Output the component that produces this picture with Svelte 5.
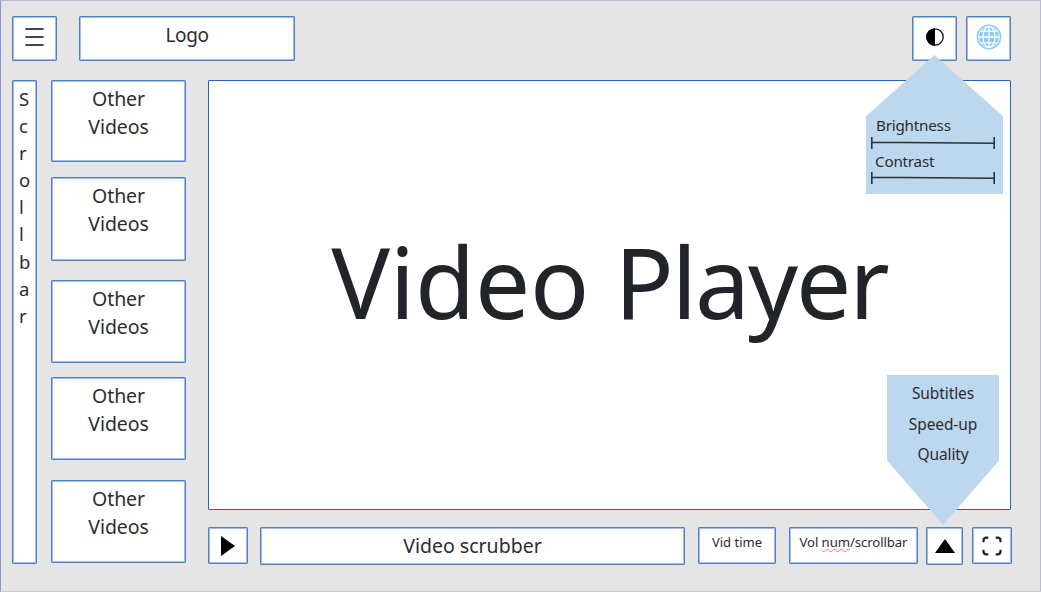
<script>
  const videos = [
    { height: 82, gap: 15 },
    { height: 84, gap: 19 },
    { height: 83, gap: 14 },
    { height: 83, gap: 20 },
    { height: 83, gap: 0 }
  ];
  const letters = 'Scrollbar'.split('');
</script>

<div class="page">
  <header>
    <button class="box square" aria-label="Menu">
      <svg width="20" height="20" viewBox="0 0 20 20"><path d="M1.2 2H17.8M1.2 10H17.8M1.2 18H17.8" stroke="#48445a" stroke-width="2.2" stroke-linecap="round" /></svg>
    </button>
    <div class="box logo"><span>Logo</span></div>
    <button class="box square contrast" aria-label="Display">
      <svg width="20" height="20" viewBox="0 0 20 20"><circle cx="10" cy="10" r="8.2" fill="#fff" stroke="#111" stroke-width="1.3" /><path d="M10 1.2A8.8 8.8 0 0 0 10 18.8Z" fill="#000" /></svg>
    </button>
    <button class="box square globe" aria-label="Language">
      <svg width="26" height="26" viewBox="0 0 26 26">
        <circle cx="13" cy="13" r="12.4" fill="#8acbfb" />
        <g fill="none" stroke="#fff" stroke-width="1.3"><circle cx="13" cy="13" r="10.5" stroke-width=".8" /><ellipse cx="13" cy="13" rx="6" ry="10.5" /><path d="M13 2.5V23.5M2.5 13H23.5M4.5 7.2H21.5M4.5 18.8H21.5" /></g>
      </svg>
    </button>
  </header>

  <main>
    <div class="box scrollbar">{#each letters as letter}<span>{letter}</span>{/each}</div>
    <aside>
      {#each videos as video}
        <div class="box video" style="height:{video.height}px;margin-bottom:{video.gap}px"><span>Other</span><span>Videos</span></div>
      {/each}
    </aside>
    <section>
      <div class="box player"><h1>Video <span>Player</span></h1></div>
      <div class="controls">
        <button class="box play" aria-label="Play"><svg width="14" height="20" viewBox="0 0 14 20"><path d="M0 0L14 10L0 20Z" /></svg></button>
        <div class="box scrubber"><span>Video scrubber</span></div>
        <div class="box time"><span>Vid time</span></div>
        <div class="box volume"><span>Vol <u>num</u>/scrollbar</span></div>
        <button class="box up" aria-label="Settings"><svg width="20" height="14" viewBox="0 0 20 14"><path d="M0 14L10 0L20 14Z" /></svg></button>
        <button class="box full" aria-label="Full screen"><svg width="20" height="20" viewBox="0 0 20 20"><path d="M1.5 6.3V4.5Q1.5 1.7 4.5 1.7H6.3M13.7 1.7H15.5Q18.5 1.7 18.5 4.5V6.3M18.5 13.7V15.5Q18.5 18.3 15.5 18.3H13.7M6.3 18.3H4.5Q1.5 18.3 1.5 15.5V13.7" fill="none" stroke="#222" stroke-width="2.2" /></svg></button>
      </div>
    </section>
  </main>

  <div class="callout display">
    <span class="brightness">Brightness</span>
    <svg width="124" height="12" viewBox="0 0 124 12"><path d="M.8 0V12M123.2 0V12M1 5.3L123 6.2" /></svg>
    <span class="contrast-label">Contrast</span>
    <svg width="124" height="12" viewBox="0 0 124 12"><path d="M.8 0V12M123.2 0V12M1 5.3L123 6.2" /></svg>
  </div>
  <div class="callout settings"><span>Subtitles</span><span>Speed-up</span><span>Quality</span></div>
</div>

<style>
  :global(body) { margin: 0; }
  .page {
    position: relative;
    box-sizing: border-box;
    width: 1041px;
    height: 592px;
    padding: 15px 28px 0 11px;
    overflow: hidden;
    background: #e5e5e5;
    border: 1px solid #b4bbd4;
    border-left-color: #8499c8;
    border-bottom-color: #cfcfd3;
    font-family: "Noto Sans", "Liberation Sans", sans-serif;
    color: #2b2d2f;
  }
  .box {
    box-sizing: border-box;
    display: flex;
    justify-content: center;
    padding: 0;
    background: #fff;
    border: 1px solid #4f80cb;
    border-radius: 1px;
    box-shadow: inset 0 0 0 1px #a3bce5;
    font: inherit;
    color: inherit;
  }
  span { white-space: nowrap; }
  button { align-items: center; }
  svg { display: block; flex: none; }
  header { display: flex; height: 45px; padding-right: 1px; }
  .square { width: 45px; }
  .logo { width: 216px; margin: 0 auto 0 22px; font-size: 19px; line-height: 36px; letter-spacing: -.4px; }
  .square svg { margin-top: -3px; }
  .globe { margin-left: 9px; }
  main { display: flex; margin-top: 19px; }
  .scrollbar {
    width: 25px;
    height: 484px;
    flex-direction: column;
    justify-content: flex-start;
    padding: 4px 0 0 6px;
    font-size: 18.5px;
    line-height: 27.1px;
  }
  aside { width: 135px; margin-left: 14px; }
  .video { flex-direction: column; justify-content: flex-start; align-items: center; padding-top: 4px; font-size: 19.5px; line-height: 27.5px; letter-spacing: -.1px; }
  section { width: 804px; margin-left: 22px; }
  .player { width: 803px; height: 430px; align-items: center; border: 1px solid #1f65c2; box-shadow: none; }
  h1 { margin: -28px 0 0; font-size: 98px; font-weight: 400; line-height: 120px; letter-spacing: -.2px; color: #212529; }
  h1 span { letter-spacing: -2px; }
  .controls { display: flex; align-items: center; height: 39px; margin-top: 16px; }
  .play { width: 40px; height: 37px; }
  .scrubber { width: 425px; height: 38px; margin-left: 12px; font-size: 19.5px; line-height: 35px; }
  .time { width: 78px; height: 37px; margin-left: 13px; font-size: 13px; line-height: 28px; }
  .volume { width: 129px; height: 37px; margin-left: 13px; font-size: 13.2px; line-height: 28px; letter-spacing: -.1px; }
  u { text-decoration: underline wavy #f36c6c 1px; text-decoration-skip-ink: none; text-underline-offset: 1px; }
  .up { width: 37px; height: 38px; margin-left: 8px; }
  .full { width: 40px; height: 37px; margin-left: 9px; }
  .callout { position: absolute; box-sizing: border-box; display: flex; flex-direction: column; background: #bdd7ee; }
  .callout path { stroke: #26323d; stroke-width: 1.6; fill: none; }
  .display { left: 865px; top: 54px; width: 137px; height: 139px; padding: 60px 6px 0 5px; font-size: 15.2px; letter-spacing: -.2px; clip-path: polygon(50% 0, 100% 44%, 100% 100%, 0 100%, 0 44%); }
  .display span { height: 22px; line-height: 21px; padding-left: 5px; }
  .display .contrast-label { margin-top: 2px; height: 21px; padding-left: 4px; }
  .settings { left: 886px; top: 374px; width: 112px; height: 150px; padding-top: 3px; align-items: center; font-size: 15.5px; letter-spacing: -.1px; line-height: 30.7px; clip-path: polygon(0 0, 100% 0, 100% 57%, 50% 100%, 0 57%); }
</style>
